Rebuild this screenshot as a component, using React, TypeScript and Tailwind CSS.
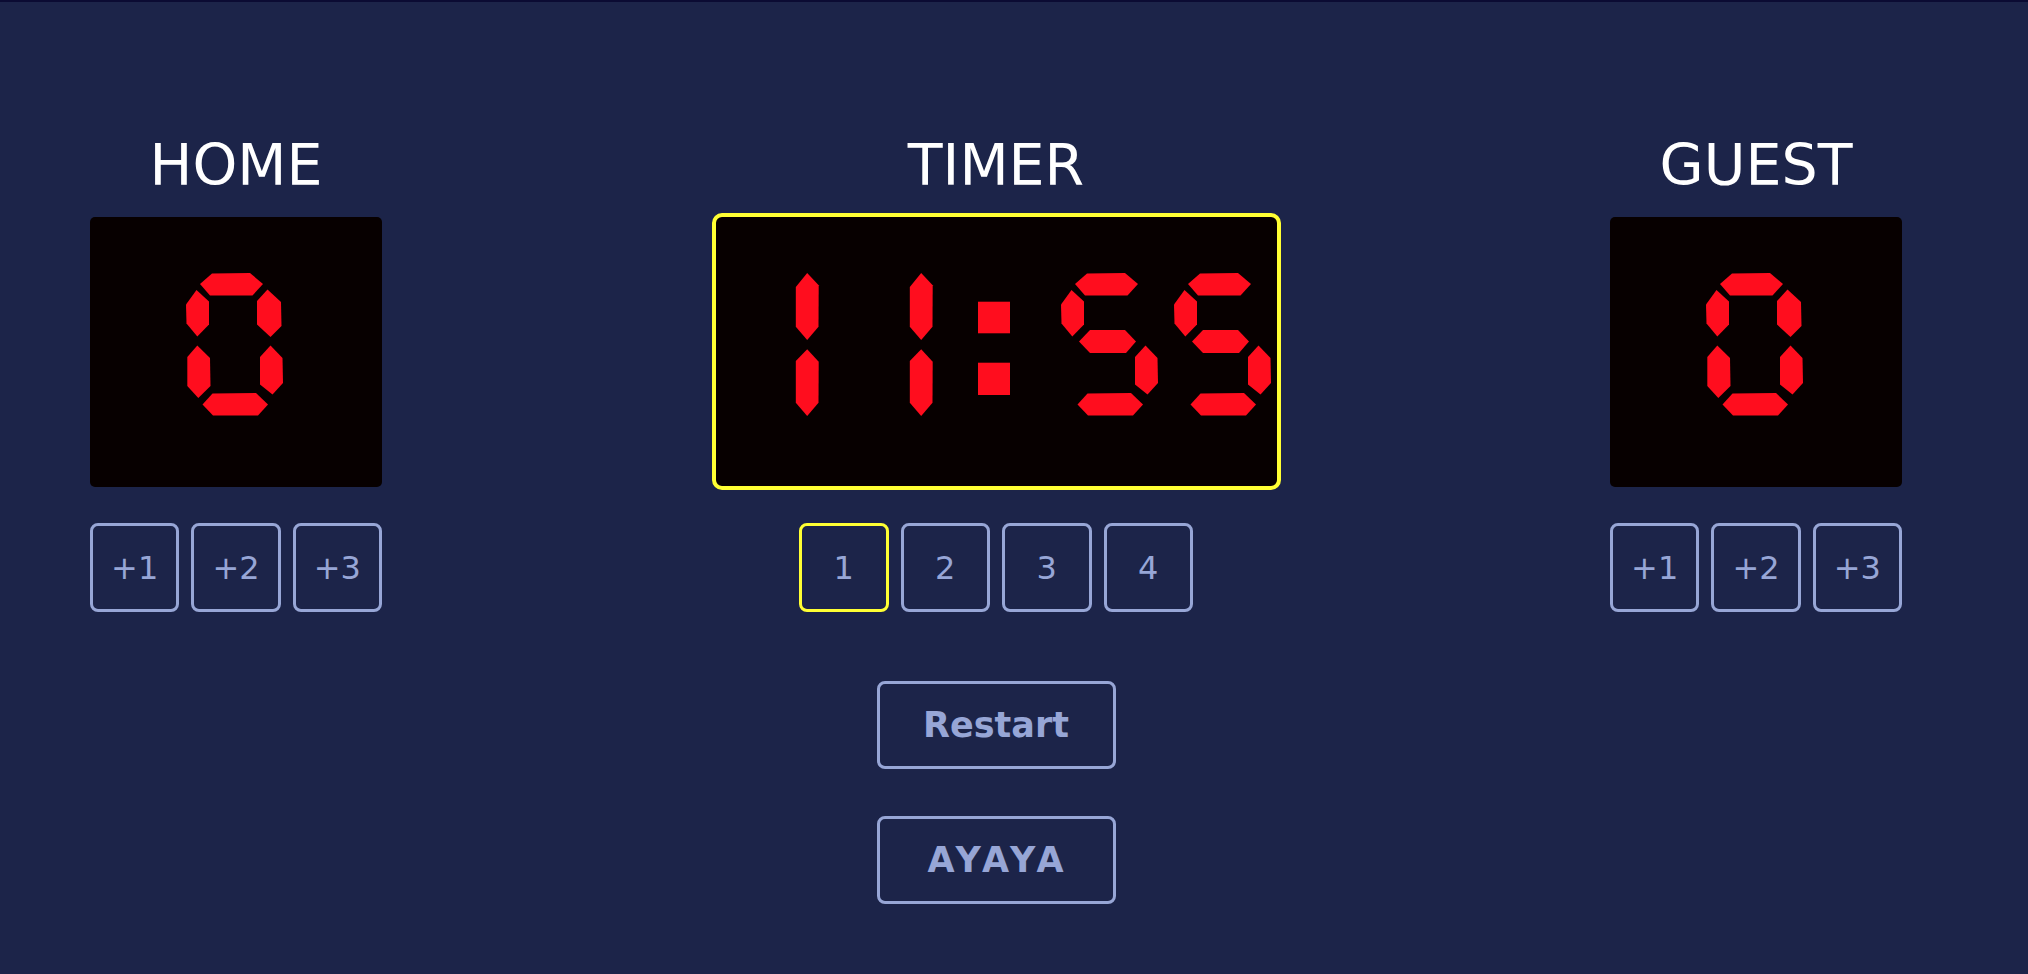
import React from "react";

// seven segment geometry, measured off a 97x143 cell
const SEG: Record<string, string> = {
  a: "14,11 26,0.5 64,0 77,11 66.5,22.5 24,22.5",
  b: "71,28 81.5,16.5 95,29 95.5,53 84.5,64 71,51.5",
  c: "74,84 84.5,72.5 96.5,85 97,110 86.5,121.5 74,111.5",
  d: "16.5,131.5 26.5,120.5 70,120 82,131.5 72,142.5 27,142.5",
  e: "1.3,84 11.3,72.5 24,85 24.5,113 12.3,125 1.3,113",
  f: "0,31.5 10.5,17 23,28.5 23,51.5 11.3,63.5 0.5,50.5",
  g: "18,68.5 29,57 64,57 75,68.5 65,80 29,80",
};

const ONE = [
  "72.8,14 84.2,0 95.7,12.3 95.5,53.7 84.2,67 72.8,53.7",
  "72.8,88 84.2,76.3 95.7,88.7 95.5,129.7 84.2,143 72.8,129.7",
];

const DIGITS: Record<string, string> = {
  "0": "abcdef",
  "2": "abged",
  "3": "abgcd",
  "4": "fgbc",
  "5": "afgcd",
  "6": "afgedc",
  "7": "abc",
  "8": "abcdefg",
  "9": "abcdfg",
};

function Digit({ ch }: { ch: string }) {
  const polys = ch === "1" ? ONE : (DIGITS[ch] ?? "").split("").map((s) => SEG[s]);
  return (
    <svg width="97" height="143" viewBox="0 0 97 143" aria-hidden="true" className="shrink-0">
      {polys.map((p, i) => (
        <polygon key={i} points={p} fill="#ff0d1e" />
      ))}
    </svg>
  );
}

function Colon() {
  return (
    <svg width="32" height="143" viewBox="0 0 32 143" aria-hidden="true" className="shrink-0">
      <rect x="0" y="28.7" width="32" height="31.6" fill="#ff0d1e" />
      <rect x="0" y="89.7" width="32" height="32.3" fill="#ff0d1e" />
    </svg>
  );
}

const font = { fontFamily: '"DejaVu Sans", Verdana, sans-serif' };

function TeamColumn({ name, score }: { name: string; score: number }) {
  return (
    <div className="flex w-[292px] flex-col items-center">
      <h2 className="text-[57px] leading-none font-normal text-white">{name}</h2>
      <div
        role="img"
        aria-label={String(score)}
        className="mt-[23px] flex h-[270px] w-[292px] justify-center rounded-[5px] bg-[#070000] pt-[56px] pr-[3px]"
      >
        <Digit ch={String(score)} />
      </div>
      <div className="mt-[36px] flex gap-[12px]">
        {[1, 2, 3].map((n) => (
          <button
            key={n}
            type="button"
            className="flex h-[89px] w-[89.33px] items-center justify-center rounded-[8px] border-[3px] border-[#97a6d6] text-[32px] text-[#97a6d6]"
          >
            +{n}
          </button>
        ))}
      </div>
    </div>
  );
}

export default function App() {
  const period = 1;
  return (
    <div className="min-h-screen border-t-2 border-[#0b0b33] bg-[#1c2449]" style={font}>
      <div className="ml-[90px] flex w-[1812px] items-start justify-between pt-[135px]">
        <TeamColumn name="HOME" score={0} />

        <div className="flex w-[569px] flex-col items-center">
          <h2 className="text-[57px] leading-none font-normal text-white">TIMER</h2>
          <div
            role="img"
            aria-label="11:55"
            className="mt-[19px] flex h-[277px] w-[569px] justify-center rounded-[10px] border-4 border-[#ffff33] bg-[#070000] pt-[56px]"
          >
            <div className="flex items-start pl-[1px]">
              <Digit ch="1" />
              <div className="ml-[17px]">
                <Digit ch="1" />
              </div>
              <div className="ml-[44px]">
                <Colon />
              </div>
              <div className="ml-[51px]">
                <Digit ch="5" />
              </div>
              <div className="ml-[16px]">
                <Digit ch="5" />
              </div>
            </div>
          </div>
          <div className="mt-[33px] flex gap-[12px]">
            {[1, 2, 3, 4].map((n) => (
              <button
                key={n}
                type="button"
                className={`flex h-[89px] w-[89.5px] items-center justify-center rounded-[8px] border-[3px] text-[32px] text-[#97a6d6] ${
                  n === period ? "border-[#ffff33]" : "border-[#97a6d6]"
                }`}
              >
                {n}
              </button>
            ))}
          </div>
          <button
            type="button"
            className="mt-[69px] flex h-[88px] w-[239px] items-center justify-center rounded-[8px] border-[3px] border-[#97a6d6] text-[35px] font-bold text-[#97a6d6]"
          >
            Restart
          </button>
          <button
            type="button"
            className="mt-[47px] flex h-[88px] w-[239px] items-center justify-center rounded-[8px] border-[3px] border-[#97a6d6] text-[35px] font-bold tracking-[1px] text-[#97a6d6] [font-kerning:none]"
          >
            AYAYA
          </button>
        </div>

        <TeamColumn name="GUEST" score={0} />
      </div>
    </div>
  );
}
